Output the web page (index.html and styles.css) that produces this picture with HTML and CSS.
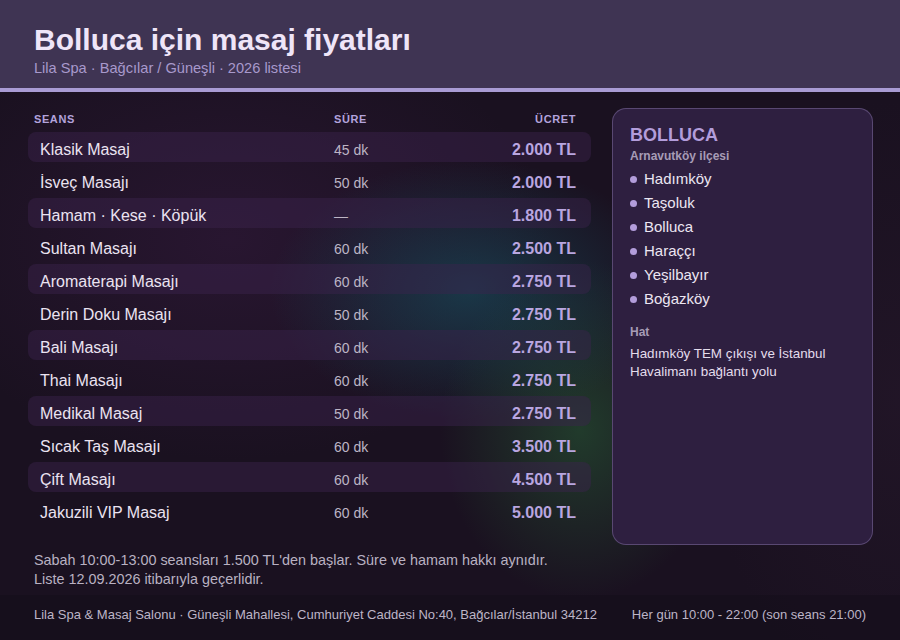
FILE: index.html
```html
<!DOCTYPE html>
<html lang="tr">
<head>
<meta charset="utf-8">
<title>Bolluca için masaj fiyatları</title>
<link rel="stylesheet" href="styles.css">
</head>
<body>
<div class="page">
  <header class="top">
    <h1 class="title">Bolluca için masaj fiyatları</h1>
    <div class="subtitle">Lila Spa · Bağcılar / Güneşli · 2026 listesi</div>
  </header>
  <main class="main">
    <section class="prices">
      <div class="thead">
        <span>Seans</span><span>Süre</span><span class="r">Ücret</span>
      </div>
      <div class="row alt"><span class="name">Klasik Masaj</span><span class="dur">45 dk</span><span class="price">2.000 TL</span></div>
      <div class="row"><span class="name">İsveç Masajı</span><span class="dur">50 dk</span><span class="price">2.000 TL</span></div>
      <div class="row alt"><span class="name">Hamam · Kese · Köpük</span><span class="dur">—</span><span class="price">1.800 TL</span></div>
      <div class="row"><span class="name">Sultan Masajı</span><span class="dur">60 dk</span><span class="price">2.500 TL</span></div>
      <div class="row alt"><span class="name">Aromaterapi Masajı</span><span class="dur">60 dk</span><span class="price">2.750 TL</span></div>
      <div class="row"><span class="name">Derin Doku Masajı</span><span class="dur">50 dk</span><span class="price">2.750 TL</span></div>
      <div class="row alt"><span class="name">Bali Masajı</span><span class="dur">60 dk</span><span class="price">2.750 TL</span></div>
      <div class="row"><span class="name">Thai Masajı</span><span class="dur">60 dk</span><span class="price">2.750 TL</span></div>
      <div class="row alt"><span class="name">Medikal Masaj</span><span class="dur">50 dk</span><span class="price">2.750 TL</span></div>
      <div class="row"><span class="name">Sıcak Taş Masajı</span><span class="dur">60 dk</span><span class="price">3.500 TL</span></div>
      <div class="row alt"><span class="name">Çift Masajı</span><span class="dur">60 dk</span><span class="price">4.500 TL</span></div>
      <div class="row"><span class="name">Jakuzili VIP Masaj</span><span class="dur">60 dk</span><span class="price">5.000 TL</span></div>
    </section>
    <aside class="card">
      <h2 class="card-title">BOLLUCA</h2>
      <div class="card-label">Arnavutköy ilçesi</div>
      <ul class="places">
        <li>Hadımköy</li>
        <li>Taşoluk</li>
        <li>Bolluca</li>
        <li>Haraççı</li>
        <li>Yeşilbayır</li>
        <li>Boğazköy</li>
      </ul>
      <div class="card-label hat">Hat</div>
      <p class="card-text">Hadımköy TEM çıkışı ve İstanbul Havalimanı bağlantı yolu</p>
    </aside>
  </main>
  <div class="notes">
    <p>Sabah 10:00-13:00 seansları 1.500 TL'den başlar. Süre ve hamam hakkı aynıdır.</p>
    <p>Liste 12.09.2026 itibarıyla geçerlidir.</p>
  </div>
  <footer class="foot">
    <span>Lila Spa &amp; Masaj Salonu · Güneşli Mahallesi, Cumhuriyet Caddesi No:40, Bağcılar/İstanbul 34212</span>
    <span>Her gün 10:00 - 22:00 (son seans 21:00)</span>
  </footer>
</div>
</body>
</html>
```
FILE: styles.css
```css
* { box-sizing: border-box; margin: 0; padding: 0; }
html, body { width: 900px; height: 640px; overflow: hidden; }
body {
  font-family: "Liberation Sans", Arial, sans-serif;
  background: #1a1120;
  color: #e9e1ef;
}
.page {
  width: 900px;
  height: 640px;
  display: flex;
  flex-direction: column;
  background:
    radial-gradient(ellipse 200px 130px at 470px 290px, rgba(24, 80, 96, 0.6), transparent),
    radial-gradient(ellipse 140px 170px at 580px 430px, rgba(40, 100, 55, 0.5), transparent),
    radial-gradient(ellipse 320px 220px at 230px 240px, rgba(52, 26, 62, 0.55), transparent),
    radial-gradient(ellipse 200px 300px at 900px 400px, rgba(40, 25, 45, 0.5), transparent),
    #1a1120;
}
.top {
  height: 92px;
  background: #3f3453;
  border-bottom: 4px solid #a99bd4;
  padding: 23px 34px 0;
}
.title {
  font-size: 30px;
  font-weight: 700;
  color: #efe5f8;
  line-height: 34px;
}
.subtitle {
  font-size: 14.6px;
  color: #a899cc;
  line-height: 18px;
  margin-top: 2px;
}
.main {
  display: grid;
  grid-template-columns: 563px 261px;
  column-gap: 21px;
  padding: 16px 27px 0 28px;
}
.prices {
  display: flex;
  flex-direction: column;
  gap: 3px;
  padding-bottom: 20px;
}
.thead, .row {
  display: grid;
  grid-template-columns: 300px 1fr auto;
  align-items: center;
}
.thead {
  height: 21px;
  padding: 0 15px 0 6px;
  font-size: 11px;
  font-weight: 700;
  letter-spacing: 0.6px;
  text-transform: uppercase;
  color: #b3a3dc;
}
.thead .r { text-align: right; }
.row {
  grid-template-columns: 294px 1fr auto;
  height: 30px;
  padding: 5px 15px 0 12px;
  border-radius: 8px;
}
.row.alt { background: rgba(60, 36, 78, 0.45); }
.name { font-size: 16px; color: #ebe3f1; }
.dur { font-size: 14px; color: #bdb5c5; }
.price { font-size: 16px; font-weight: 700; color: #b9a6e0; text-align: right; }
.card {
  background: #2e1f40;
  border: 1px solid rgba(170, 150, 210, 0.35);
  border-radius: 14px;
  padding: 16px 17px;
}
.card-title {
  font-size: 18px;
  font-weight: 700;
  color: #b39ddb;
  line-height: 20px;
}
.card-label {
  font-size: 12px;
  font-weight: 700;
  color: #a79cb6;
  line-height: 16px;
  margin-top: 3px;
}
.places {
  list-style: none;
  margin-top: 3px;
}
.places li {
  font-size: 15px;
  line-height: 24px;
  color: #ece6f2;
  display: flex;
  align-items: center;
  gap: 7px;
}
.places li::before {
  content: "";
  width: 7px;
  height: 7px;
  border-radius: 50%;
  background: #b39ddb;
  flex: none;
}
.card-label.hat { margin-top: 13px; }
.card-text {
  font-size: 13.4px;
  line-height: 18px;
  color: #e4dcec;
  margin-top: 5px;
}
.notes {
  padding: 6px 34px 0;
  font-size: 14.4px;
  line-height: 19px;
  color: #b9b1c2;
}
.foot {
  margin-top: auto;
  height: 45px;
  background: rgba(22, 15, 28, 0.85);
  display: flex;
  justify-content: space-between;
  padding: 12px 34px 0;
  font-size: 13px;
  line-height: 16px;
  color: #bdb5c7;
}
```
